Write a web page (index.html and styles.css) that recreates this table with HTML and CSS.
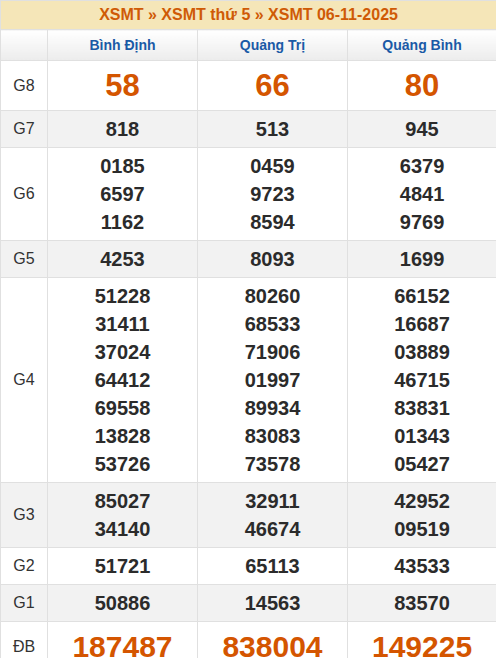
FILE: index.html
```html
<!DOCTYPE html>
<html lang="vi">
<head>
<meta charset="utf-8">
<link rel="stylesheet" href="styles.css">
</head>
<body>
<table class="kq">
  <colgroup>
    <col class="c-label"><col class="c-prov"><col class="c-prov"><col class="c-prov-last">
  </colgroup>
  <thead>
    <tr><th colspan="4" class="title">XSMT » XSMT thứ 5 » XSMT 06-11-2025</th></tr>
    <tr class="prov-row"><th></th><th>Bình Định</th><th>Quảng Trị</th><th>Quảng Bình</th></tr>
  </thead>
  <tbody>
    <tr class="big"><td class="lbl">G8</td><td>58</td><td>66</td><td>80</td></tr>
    <tr class="alt"><td class="lbl">G7</td><td>818</td><td>513</td><td>945</td></tr>
    <tr><td class="lbl">G6</td><td>0185<br>6597<br>1162</td><td>0459<br>9723<br>8594</td><td>6379<br>4841<br>9769</td></tr>
    <tr class="alt"><td class="lbl">G5</td><td>4253</td><td>8093</td><td>1699</td></tr>
    <tr><td class="lbl">G4</td><td>51228<br>31411<br>37024<br>64412<br>69558<br>13828<br>53726</td><td>80260<br>68533<br>71906<br>01997<br>89934<br>83083<br>73578</td><td>66152<br>16687<br>03889<br>46715<br>83831<br>01343<br>05427</td></tr>
    <tr class="alt"><td class="lbl">G3</td><td>85027<br>34140</td><td>32911<br>46674</td><td>42952<br>09519</td></tr>
    <tr><td class="lbl">G2</td><td>51721</td><td>65113</td><td>43533</td></tr>
    <tr class="alt"><td class="lbl">G1</td><td>50886</td><td>14563</td><td>83570</td></tr>
    <tr class="big"><td class="lbl">ĐB</td><td class="db">187487</td><td class="db">838004</td><td class="db">149225</td></tr>
  </tbody>
</table>
</body>
</html>
```
FILE: styles.css
```css
html, body {
  margin: 0;
  padding: 0;
  background: #fff;
}
body {
  font-family: "Liberation Sans", Arial, sans-serif;
}
.kq {
  width: 496px;
  table-layout: fixed;
  border-collapse: collapse;
  border: 1px solid #bcbcbc;
}
.c-label { width: 47px; }
.c-prov { width: 150px; }
.c-prov-last { width: 149px; }
.kq th, .kq td {
  border: 1px solid #e0e0e0;
  text-align: center;
  padding: 0;
}
.title {
  background: #f5e6b8;
  color: #cf5a06;
  font-size: 16px;
  font-weight: bold;
  height: 28px;
  border-bottom-color: #e8e0c8;
}
.prov-row th {
  height: 30px;
  background: linear-gradient(#ffffff, #ececec);
  color: #1a5aa6;
  font-size: 14px;
  font-weight: bold;
}
.kq td {
  color: #2b2b2b;
  font-size: 20px;
  font-weight: bold;
  line-height: 28px;
  padding: 4px 0;
}
.kq td.lbl {
  font-size: 16px;
  font-weight: normal;
  color: #333;
}
.alt td { background: #f2f2f2; }
.big td {
  font-size: 31px;
  line-height: 41px;
  color: #d45500;
}
.big td.db { font-size: 30px; }
.big td.lbl { line-height: 41px; color: #333; }
```
